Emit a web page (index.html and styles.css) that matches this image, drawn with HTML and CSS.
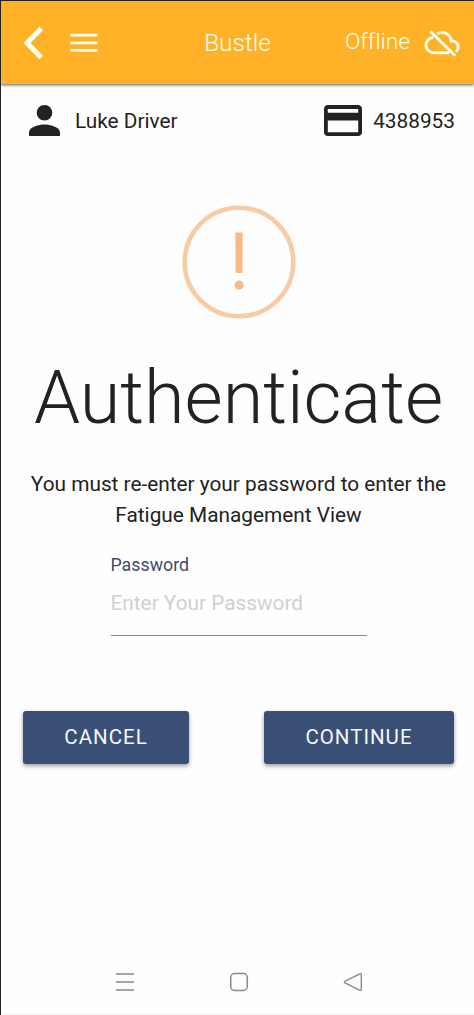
FILE: index.html
```html
<!DOCTYPE html>
<html lang="en">
<head>
<meta charset="utf-8">
<title>Bustle</title>
<link rel="stylesheet" href="styles.css">
</head>
<body>
<div class="app">
  <header class="toolbar">
    <div class="toolbar-left">
      <svg class="back" width="22" height="34" viewBox="0 0 22 34"><path d="M18.200 2.500 4 17 18.200 31.500" fill="none" stroke="#fffff0" stroke-width="5.200"/></svg>
      <svg class="menu" width="28" height="20" viewBox="0 0 28 20"><path d="M.5 2.200h27M.5 9.800h27M.5 17.400h27" stroke="#fffff0" stroke-width="2.800"/></svg>
    </div>
    <h1 class="brand">Bustle</h1>
    <div class="toolbar-right">
      <span class="status">Offline</span>
      <svg class="cloud" width="36" height="27" viewBox="0 0 36 27" fill="none" stroke="#fffff0" stroke-width="2.900"><path d="M9.300 7.500C5 7.500 2 11.200 2 15.200c0 4.500 3.500 7.500 8 7.500h15M13.300 3.700c6-3.400 13.200.3 14.100 7.300 3.900-.2 6.900 2.500 6.900 6 0 2-.9 3.500-2.400 4.600M6.300 1.300l24.900 24.500"/></svg>
    </div>
  </header>
  <section class="info">
    <div class="user">
      <svg width="31" height="31" viewBox="4 4 16 16" fill="#222"><path d="M12 12c2.210 0 4-1.790 4-4s-1.790-4-4-4-4 1.790-4 4 1.790 4 4 4zm0 2c-2.670 0-8 1.340-8 4v2h16v-2c0-2.660-5.330-4-8-4z"/></svg>
      <span class="user-name">Luke Driver</span>
    </div>
    <div class="card">
      <svg width="38" height="31" viewBox="2 4 20 16" preserveAspectRatio="none" fill="#222"><path d="M20 4H4c-1.110 0-1.990.89-1.990 2L2 18c0 1.110.89 2 2 2h16c1.110 0 2-.89 2-2V6c0-1.110-.89-2-2-2zm0 14H4v-6h16v6zm0-10H4V6h16v2z"/></svg>
      <span class="card-number">4388953</span>
    </div>
  </section>
  <main class="content">
    <svg class="warning" width="114" height="114" viewBox="0 0 114 114"><circle cx="57" cy="57" r="54.300" fill="none" stroke="#f9cba4" stroke-width="4.600"/><path d="M53.300 27.500h7.400l-.3 40.500h-6.800z" fill="#f8bb86"/><circle cx="57" cy="80" r="4.500" fill="#f8bb86"/></svg>
    <h2 class="title">Authenticate</h2>
    <p class="message">You must re-enter your password to enter the<br>Fatigue Management View</p>
    <div class="field">
      <label class="label" for="password">Password</label>
      <input class="input" id="password" type="password" placeholder="Enter Your Password">
    </div>
    <div class="actions">
      <button class="button cancel">CANCEL</button>
      <button class="button continue">CONTINUE</button>
    </div>
  </main>
  <nav class="system-nav">
    <svg width="20" height="20" viewBox="0 0 20 20" stroke="#888" stroke-width="1.500"><path d="M1 2h18M1 10h18M1 18h18"/></svg>
    <svg width="20" height="20" viewBox="0 0 20 20" fill="none" stroke="#888" stroke-width="1.500"><rect x="1.700" y="1.500" width="16.600" height="17" rx="4"/></svg>
    <svg width="20" height="20" viewBox="0 0 20 20" fill="none" stroke="#888" stroke-width="1.400"><path d="M17 1.800 2 9.200q-1.300.8 0 1.600l15 7.500q1.300.4 1.300-1V3q0-1.700-1.300-1.200z"/></svg>
  </nav>
</div>
</body>
</html>
```
FILE: styles.css
```css
* { box-sizing: border-box; }
body { margin: 0; background: #fefefe; font-family: Roboto, sans-serif; color: #222; }
svg { display: block; flex: none; }
.app {
  width: 474px;
  height: 1015px;
  display: flex;
  flex-direction: column;
  border-top: 1px solid #292724;
  border-left: 1px solid #222;
  overflow: hidden;
}
.toolbar {
  height: 83px;
  flex: none;
  display: grid;
  grid-template-columns: 1fr auto 1fr;
  align-items: center;
  padding: 0 14px 0 22px;
  background: #ffb228;
  box-shadow: 0 1px 3px rgba(0, 0, 0, .65);
  color: #fffff0;
}
.toolbar-left, .toolbar-right, .user, .card { display: flex; align-items: center; }
.toolbar-left { gap: 25px; }
.toolbar-right { justify-content: flex-end; gap: 14px; }
.brand { margin: -1px 8px 0 0; font-size: 24.400px; font-weight: 300; }
.status { margin-top: -2px; font-size: 22.800px; font-weight: 300; font-variant-ligatures: none; }
.cloud { margin-top: 1px; }
.info {
  height: 72px;
  flex: none;
  display: flex;
  justify-content: space-between;
  padding: 0 19px 0 28px;
  font-size: 20.800px;
}
.user { gap: 15px; }
.card { gap: 11px; }
.user-name, .card-number { padding-top: 2px; }
.content { display: flex; flex-direction: column; align-items: center; flex: 1; padding-top: 49px; }
.warning { margin-left: 2px; }
.title { margin: 36px 0 0 2px; font-size: 73.800px; line-height: 86px; font-weight: 300; white-space: nowrap; }
.message { margin: 28px 0 0 2px; text-align: center; font-size: 20.800px; line-height: 31px; white-space: nowrap; }
.field { width: 256px; margin: 21px 0 0 2px; display: flex; flex-direction: column; }
.label { font-size: 17.800px; line-height: 26px; color: #3c4c6c; }
.input {
  height: 58px;
  padding: 0 0 7px;
  border: 0;
  border-bottom: 1px solid #858889;
  outline: 0;
  background: transparent;
  font: 20.800px Roboto, sans-serif;
}
.input::placeholder { color: #d0d0d0; opacity: 1; }
.actions { width: 100%; display: flex; justify-content: space-between; padding: 0 20px 0 22px; margin-top: 75px; }
.button {
  height: 53px;
  padding: 0 0 1px;
  border: 0;
  border-radius: 3px;
  background: #394f75;
  color: #f4f8fb;
  font: 20.500px Roboto, sans-serif;
  letter-spacing: 1px;
  box-shadow: 0 2px 4px rgba(0, 0, 0, .4);
}
.cancel { width: 166px; }
.continue { width: 190px; }
.system-nav {
  height: 66px;
  flex: none;
  display: flex;
  justify-content: center;
  gap: 94px;
  padding-top: 23px;
  margin-left: 2px;
  border-bottom: 1px solid #f1f1f1;
}
```
